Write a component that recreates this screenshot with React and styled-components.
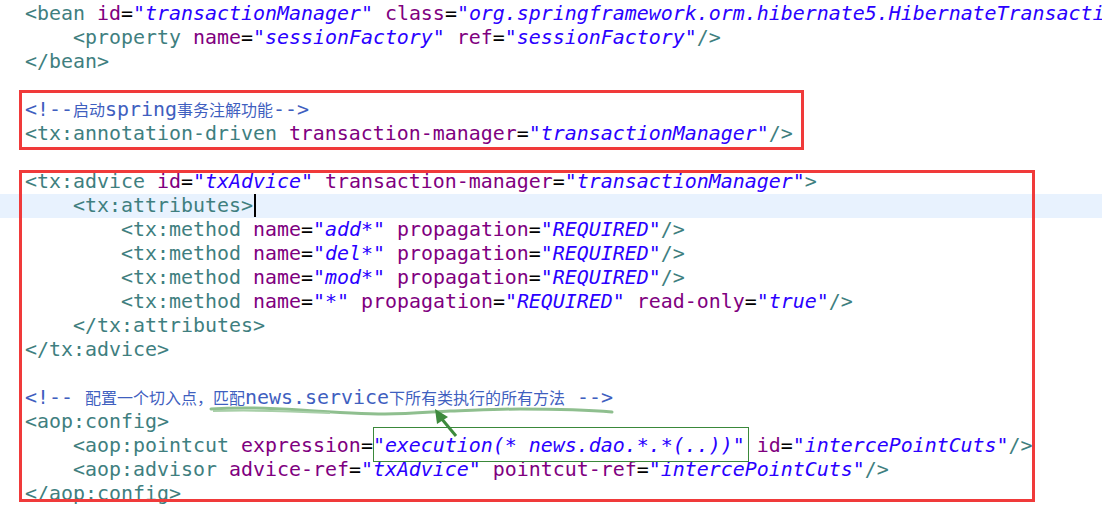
import React from "react";
import styled, { createGlobalStyle } from "styled-components";

const Global = createGlobalStyle`
  html, body { margin: 0; padding: 0; background: #ffffff; overflow: hidden; }
  body { width: 1102px; height: 507px; }
`;

const Page = styled.div`
  position: relative;
  width: 1102px;
  height: 507px;
  overflow: hidden;
  background: #ffffff;
`;

const Editor = styled.div`
  display: flex;
  flex-direction: column;
  padding-top: 2px;
  font-family: "DejaVu Sans Mono", "Liberation Mono", monospace;
  font-size: 19.93px;
`;

const Line = styled.div`
  display: block;
  height: 24px;
  line-height: 24px;
  padding-left: ${(p) => 25 + p.$indent * 48}px;
  white-space: pre;
  overflow: visible;
  background: ${(p) => (p.$current ? "#e8f2fe" : "transparent")};
`;

const Tag = styled.span`color: #3f7f7f;`;
const Attr = styled.span`color: #7f007f;`;
const Eq = styled.span`color: #000000;`;
const Val = styled.span`color: #2a00ff; font-style: italic;`;
const Comment = styled.span`color: #3f5fbf;`;
const Cjk = styled.span`
  font-family: "Noto Sans CJK SC", sans-serif;
  font-size: 16px;
  line-height: 16px;
  color: #3f5fbf;
`;
const Caret = styled.span`
  display: inline-block;
  width: 2px;
  height: 23px;
  background: #000;
  margin-left: 1px;
  vertical-align: top;
`;

const Box = styled.div`
  position: absolute;
  left: ${(p) => p.$x}px;
  top: ${(p) => p.$y}px;
  width: ${(p) => p.$w}px;
  height: ${(p) => p.$h}px;
  border: ${(p) => p.$bw}px solid ${(p) => p.$c};
  box-sizing: border-box;
  pointer-events: none;
`;

const Marks = styled.svg`
  position: absolute;
  left: 0;
  top: 0;
  pointer-events: none;
`;

const A = ({ n, v }) => (
  <>
    {" "}
    <Attr>{n}</Attr>
    <Eq>=</Eq>
    <Val>"{v}"</Val>
  </>
);

export default function App() {
  return (
    <Page>
      <Global />
      <Editor>
        <Line $indent={0}>
          <Tag>&lt;bean</Tag>
          <A n="id" v="transactionManager" />
          <A n="class" v="org.springframework.orm.hibernate5.HibernateTransactionManager" />
          <Tag>&gt;</Tag>
        </Line>
        <Line $indent={1}>
          <Tag>&lt;property</Tag>
          <A n="name" v="sessionFactory" />
          <A n="ref" v="sessionFactory" />
          <Tag>/&gt;</Tag>
        </Line>
        <Line $indent={0}>
          <Tag>&lt;/bean&gt;</Tag>
        </Line>
        <Line $indent={0} />
        <Line $indent={0}>
          <Comment>&lt;!--</Comment>
          <Cjk>启动</Cjk>
          <Comment>spring</Comment>
          <Cjk>事务注解功能</Cjk>
          <Comment>--&gt;</Comment>
        </Line>
        <Line $indent={0}>
          <Tag>&lt;tx:annotation-driven</Tag>
          <A n="transaction-manager" v="transactionManager" />
          <Tag>/&gt;</Tag>
        </Line>
        <Line $indent={0} />
        <Line $indent={0}>
          <Tag>&lt;tx:advice</Tag>
          <A n="id" v="txAdvice" />
          <A n="transaction-manager" v="transactionManager" />
          <Tag>&gt;</Tag>
        </Line>
        <Line $indent={1} $current>
          <Tag>&lt;tx:attributes&gt;</Tag>
          <Caret />
        </Line>
        {["add*", "del*", "mod*"].map((m) => (
          <Line $indent={2} key={m}>
            <Tag>&lt;tx:method</Tag>
            <A n="name" v={m} />
            <A n="propagation" v="REQUIRED" />
            <Tag>/&gt;</Tag>
          </Line>
        ))}
        <Line $indent={2}>
          <Tag>&lt;tx:method</Tag>
          <A n="name" v="*" />
          <A n="propagation" v="REQUIRED" />
          <A n="read-only" v="true" />
          <Tag>/&gt;</Tag>
        </Line>
        <Line $indent={1}>
          <Tag>&lt;/tx:attributes&gt;</Tag>
        </Line>
        <Line $indent={0}>
          <Tag>&lt;/tx:advice&gt;</Tag>
        </Line>
        <Line $indent={0} />
        <Line $indent={0}>
          <Comment>&lt;!-- </Comment>
          <Cjk>配置一个切入点，匹配</Cjk>
          <Comment>news.service</Comment>
          <Cjk>下所有类执行的所有方法</Cjk>
          <Comment> --&gt;</Comment>
        </Line>
        <Line $indent={0}>
          <Tag>&lt;aop:config&gt;</Tag>
        </Line>
        <Line $indent={1}>
          <Tag>&lt;aop:pointcut</Tag>
          <A n="expression" v="execution(* news.dao.*.*(..))" />
          <A n="id" v="intercePointCuts" />
          <Tag>/&gt;</Tag>
        </Line>
        <Line $indent={1}>
          <Tag>&lt;aop:advisor</Tag>
          <A n="advice-ref" v="txAdvice" />
          <A n="pointcut-ref" v="intercePointCuts" />
          <Tag>/&gt;</Tag>
        </Line>
        <Line $indent={0}>
          <Tag>&lt;/aop:config&gt;</Tag>
        </Line>
      </Editor>

      <Box $x={19} $y={90} $w={785} $h={60} $bw={3} $c="#f03a3a" />
      <Box $x={19} $y={170} $w={1016} $h={332} $bw={3} $c="#f03a3a" />
      <Box $x={373} $y={427} $w={376} $h={35} $bw={1.5} $c="#3a883a" />

      <Marks width="1102" height="507" viewBox="0 0 1102 507">
        <path
          d="M211 409 C 240 407, 270 408, 300 410 C 330 412, 360 414, 385 414 C 410 414, 430 412, 450 411 C 480 410, 500 409, 520 409 C 560 409, 590 410, 612 412"
          fill="none"
          stroke="#8fbf8f"
          strokeWidth="3"
          strokeLinecap="round"
        />
        <path d="M213 411 C 250 410, 290 411, 330 413" fill="none" stroke="#a8cfa8" strokeWidth="2" />
        <line x1="456" y1="436" x2="441" y2="418" stroke="#3d8a3d" strokeWidth="3" />
        <polygon points="435,409 448,417 437,424" fill="#3d8a3d" />
      </Marks>
    </Page>
  );
}
